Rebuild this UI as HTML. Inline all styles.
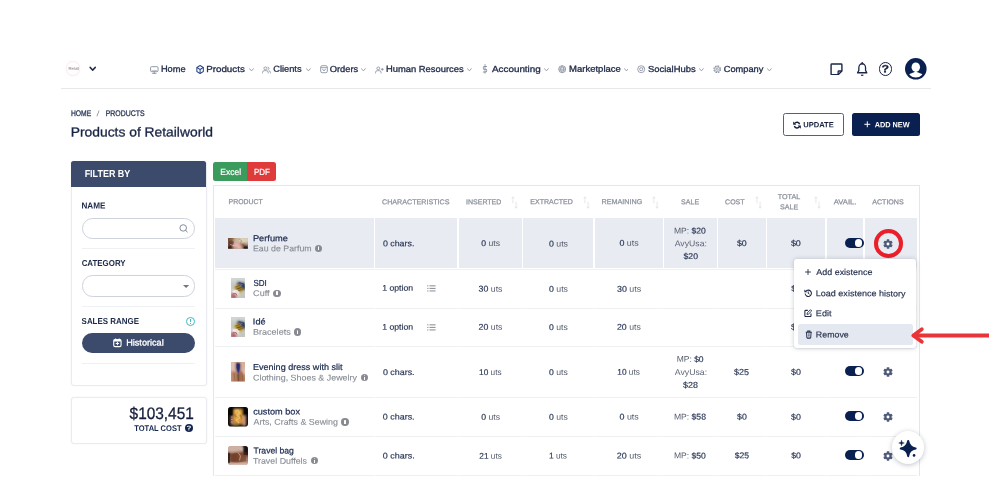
<!DOCTYPE html>
<html lang="en">
<head>
<meta charset="utf-8">
<title>Products of Retailworld</title>
<style>
html,body{margin:0;padding:0;background:#fff;}
body{width:1000px;height:500px;position:relative;overflow:hidden;font-family:"Liberation Sans",sans-serif;}
.app{position:absolute;left:0;top:0;width:1000px;height:500px;overflow:hidden;will-change:transform;background:#fff;}
.b{position:absolute;box-sizing:border-box;display:block;}
.t{position:absolute;white-space:nowrap;line-height:1;display:block;transform-origin:0 0;}
.g{color:#8b8f97;font-weight:400;-webkit-text-stroke:0;}
.u{color:#535a6a;font-weight:400;-webkit-text-stroke:0;}
</style>
</head>
<body>
<div class="app">
<div class="b" style="left:66.20px;top:61.40px;width:14.20px;height:14.20px;border-radius:50%;border:1px solid #fbf0f0;background:#fffdfd;box-shadow:0 0 1.500px #faeaea;"></div>
<span class="t" id="t0" style="left:68px;top:67px;font-size:3.8px;color:#a3a3a7;transform:translate(0.48px,0.87px) rotate(.03deg) scaleX(1.0862);-webkit-text-stroke:0.15px #a3a3a7;">Retail</span>
<svg class="b" style="left:88.60px;top:66.10px;" width="7.40" height="5.80" viewBox="0 0 10 7" preserveAspectRatio="none"><path d="M1.5 1.6 L5 5 L8.5 1.6" fill="none" stroke="#1d2745" stroke-width="1.9" stroke-linecap="round" stroke-linejoin="round"/></svg>
<svg class="b" style="left:150.00px;top:65.60px;" width="8.60" height="8.00" viewBox="0 0 24 24" preserveAspectRatio="none"><rect x="1.5" y="2" width="21" height="15" rx="3" fill="none" stroke="#8990a0" stroke-width="2.6"/><path d="M7 22 H17 M12 17 V22" stroke="#8990a0" stroke-width="2.6" fill="none" stroke-linecap="round"/><rect x="4" y="12" width="16" height="3" fill="#8990a0" opacity=".5"/></svg>
<span class="t" id="t1" style="left:160px;top:64px;font-size:8.7px;color:#222d4a;transform:translate(0.92px,0.87px) rotate(.03deg) scaleX(1.0657);-webkit-text-stroke:0.3px #222d4a;">Home</span>
<svg class="b" style="left:195.80px;top:65.00px;" width="8.20" height="9.00" viewBox="0 0 24 24" preserveAspectRatio="none"><path d="M12 1.5 L21.5 6.8 V17.2 L12 22.5 L2.5 17.2 V6.8 Z" fill="none" stroke="#2a4686" stroke-width="3" stroke-linejoin="round"/><path d="M2.5 6.8 L12 12 L21.5 6.8 M12 12 V22.5" fill="none" stroke="#2a4686" stroke-width="3" stroke-linejoin="round"/></svg>
<span class="t" id="t2" style="left:206px;top:64px;font-size:8.7px;color:#222d4a;transform:translate(0.16px,0.88px) rotate(.03deg) scaleX(1.1263);-webkit-text-stroke:0.3px #222d4a;">Products</span>
<svg class="b" style="left:248.60px;top:67.60px;" width="5.00" height="3.80" viewBox="0 0 10 6" preserveAspectRatio="none"><path d="M1 1 L5 4.6 L9 1" fill="none" stroke="#8990a0" stroke-width="1.5" stroke-linecap="round" stroke-linejoin="round"/></svg>
<svg class="b" style="left:262.20px;top:65.60px;" width="9.00" height="8.00" viewBox="0 0 24 24" preserveAspectRatio="none"><circle cx="9" cy="7" r="4" fill="none" stroke="#8990a0" stroke-width="2.4"/><path d="M1.5 21 v-2 a5 5 0 0 1 5-5 h5 a5 5 0 0 1 5 5 v2" fill="none" stroke="#8990a0" stroke-width="2.4" stroke-linecap="round"/><path d="M16 3.2 a4 4 0 0 1 0 7.6 M22.5 21 v-2 a5 5 0 0 0 -3.5 -4.7" fill="none" stroke="#8990a0" stroke-width="2.4" stroke-linecap="round"/></svg>
<span class="t" id="t3" style="left:273px;top:64px;font-size:8.7px;color:#222d4a;transform:translate(0.23px,0.86px) rotate(.03deg) scaleX(1.0680);-webkit-text-stroke:0.3px #222d4a;">Clients</span>
<svg class="b" style="left:305.80px;top:67.60px;" width="4.80" height="3.80" viewBox="0 0 10 6" preserveAspectRatio="none"><path d="M1 1 L5 4.6 L9 1" fill="none" stroke="#8990a0" stroke-width="1.5" stroke-linecap="round" stroke-linejoin="round"/></svg>
<svg class="b" style="left:319.80px;top:65.40px;" width="8.00" height="8.40" viewBox="0 0 24 24" preserveAspectRatio="none"><rect x="2" y="2" width="20" height="20" rx="4.5" fill="none" stroke="#8990a0" stroke-width="2.6"/><path d="M2 7.5 H22" stroke="#8990a0" stroke-width="2.4"/><path d="M8 12 a4 4 0 0 0 8 0" fill="none" stroke="#8990a0" stroke-width="2.4" stroke-linecap="round"/></svg>
<span class="t" id="t4" style="left:329px;top:64px;font-size:8.7px;color:#222d4a;transform:translate(0.74px,0.89px) rotate(.03deg) scaleX(1.0709);-webkit-text-stroke:0.3px #222d4a;">Orders</span>
<svg class="b" style="left:361.40px;top:67.60px;" width="4.80" height="3.80" viewBox="0 0 10 6" preserveAspectRatio="none"><path d="M1 1 L5 4.6 L9 1" fill="none" stroke="#8990a0" stroke-width="1.5" stroke-linecap="round" stroke-linejoin="round"/></svg>
<svg class="b" style="left:375.00px;top:65.60px;" width="8.80" height="8.00" viewBox="0 0 24 24" preserveAspectRatio="none"><circle cx="9" cy="7" r="4" fill="none" stroke="#8990a0" stroke-width="2.4"/><path d="M1.5 21 v-2 a5 5 0 0 1 5-5 h5 a5 5 0 0 1 5 5 v2" fill="none" stroke="#8990a0" stroke-width="2.4" stroke-linecap="round"/><path d="M20 7 v6 M17 10 h6" stroke="#8990a0" stroke-width="2.4" stroke-linecap="round"/></svg>
<span class="t" id="t5" style="left:385px;top:64px;font-size:8.7px;color:#222d4a;transform:translate(0.91px,0.87px) rotate(.03deg) scaleX(1.0805);-webkit-text-stroke:0.3px #222d4a;">Human Resources</span>
<svg class="b" style="left:467.40px;top:67.60px;" width="4.80" height="3.80" viewBox="0 0 10 6" preserveAspectRatio="none"><path d="M1 1 L5 4.6 L9 1" fill="none" stroke="#8990a0" stroke-width="1.5" stroke-linecap="round" stroke-linejoin="round"/></svg>
<svg class="b" style="left:482.20px;top:64.40px;" width="6.00" height="9.60" viewBox="2 0 20 24" preserveAspectRatio="none"><path d="M12 1 V23 M17.5 6 H9.5 a3.5 3.5 0 0 0 0 7 h5 a3.5 3.5 0 0 1 0 7 H6" fill="none" stroke="#8990a0" stroke-width="2.6" stroke-linecap="round"/></svg>
<span class="t" id="t6" style="left:491px;top:64px;font-size:8.7px;color:#222d4a;transform:translate(0.98px,0.93px) rotate(.03deg) scaleX(1.1348);-webkit-text-stroke:0.3px #222d4a;">Accounting</span>
<svg class="b" style="left:544.20px;top:67.60px;" width="4.80" height="3.80" viewBox="0 0 10 6" preserveAspectRatio="none"><path d="M1 1 L5 4.6 L9 1" fill="none" stroke="#8990a0" stroke-width="1.5" stroke-linecap="round" stroke-linejoin="round"/></svg>
<svg class="b" style="left:557.80px;top:65.40px;" width="8.40" height="8.40" viewBox="0 0 24 24" preserveAspectRatio="none"><circle cx="12" cy="12" r="10" fill="none" stroke="#8990a0" stroke-width="2.4"/><path d="M2 12 H22 M12 2 a15 15 0 0 1 0 20 a15 15 0 0 1 0 -20" fill="none" stroke="#8990a0" stroke-width="2.2"/><path d="M3.5 7.5 H20.5 M3.5 16.5 H20.5" stroke="#8990a0" stroke-width="1.6"/></svg>
<span class="t" id="t7" style="left:569px;top:64px;font-size:8.7px;color:#222d4a;transform:translate(0.08px,0.83px) rotate(.03deg) scaleX(1.0937);-webkit-text-stroke:0.3px #222d4a;">Marketplace</span>
<svg class="b" style="left:623.60px;top:67.60px;" width="4.80" height="3.80" viewBox="0 0 10 6" preserveAspectRatio="none"><path d="M1 1 L5 4.6 L9 1" fill="none" stroke="#8990a0" stroke-width="1.5" stroke-linecap="round" stroke-linejoin="round"/></svg>
<svg class="b" style="left:637.20px;top:65.40px;" width="8.40" height="8.40" viewBox="0 0 24 24" preserveAspectRatio="none"><circle cx="12" cy="12" r="10" fill="none" stroke="#8990a0" stroke-width="2.4"/><circle cx="12" cy="12" r="4.5" fill="none" stroke="#8990a0" stroke-width="2.4"/><path d="M16 9 L19 6" stroke="#8990a0" stroke-width="2.2"/></svg>
<span class="t" id="t8" style="left:648px;top:64px;font-size:8.7px;color:#222d4a;transform:translate(0.02px,0.88px) rotate(.03deg) scaleX(1.0849);-webkit-text-stroke:0.3px #222d4a;">SocialHubs</span>
<svg class="b" style="left:699.40px;top:67.60px;" width="4.80" height="3.80" viewBox="0 0 10 6" preserveAspectRatio="none"><path d="M1 1 L5 4.6 L9 1" fill="none" stroke="#8990a0" stroke-width="1.5" stroke-linecap="round" stroke-linejoin="round"/></svg>
<svg class="b" style="left:712.80px;top:65.40px;" width="8.40" height="8.40" viewBox="0 0 24 24" preserveAspectRatio="none"><circle cx="12" cy="12" r="9.5" fill="none" stroke="#8990a0" stroke-width="3" stroke-dasharray="5 2.4"/><circle cx="12" cy="12" r="7" fill="none" stroke="#8990a0" stroke-width="2"/><circle cx="12" cy="12" r="3" fill="none" stroke="#8990a0" stroke-width="2.2"/></svg>
<span class="t" id="t9" style="left:723px;top:64px;font-size:8.7px;color:#222d4a;transform:translate(0.73px,0.89px) rotate(.03deg) scaleX(1.0676);-webkit-text-stroke:0.3px #222d4a;">Company</span>
<svg class="b" style="left:767.00px;top:67.60px;" width="4.80" height="3.80" viewBox="0 0 10 6" preserveAspectRatio="none"><path d="M1 1 L5 4.6 L9 1" fill="none" stroke="#8990a0" stroke-width="1.5" stroke-linecap="round" stroke-linejoin="round"/></svg>
<svg class="b" style="left:830.40px;top:62.60px;" width="13.00" height="12.80" viewBox="0 0 24 24" preserveAspectRatio="none"><path d="M3.5 2 H20.5 a1.5 1.5 0 0 1 1.5 1.5 V15 L15 22 H3.5 a1.5 1.5 0 0 1 -1.5 -1.5 V3.5 a1.5 1.5 0 0 1 1.5 -1.5 Z" fill="none" stroke="#1b2747" stroke-width="2.6" stroke-linejoin="round"/><path d="M22 15 H16.5 a1.5 1.5 0 0 0 -1.5 1.5 V22" fill="none" stroke="#1b2747" stroke-width="2.4"/></svg>
<svg class="b" style="left:856.00px;top:62.00px;" width="12.40" height="14.40" viewBox="0 0 24 24" preserveAspectRatio="none"><path d="M12 3 a6.5 6.5 0 0 0 -6.5 6.5 V14 L3 18 H21 L18.5 14 V9.500 A6.5 6.5 0 0 0 12 3 Z" fill="none" stroke="#1b2747" stroke-width="2.5" stroke-linejoin="round"/><path d="M12 1 V3" stroke="#1b2747" stroke-width="2.5" stroke-linecap="round"/><path d="M9.8 21.5 a2.3 2.3 0 0 0 4.4 0 Z" fill="#1b2747" stroke="#1b2747" stroke-width="1"/></svg>
<div class="b" style="left:878.50px;top:62.10px;width:13.80px;height:13.80px;border-radius:50%;border:1.800px solid #16213f;"></div>
<span class="t" id="t10" style="left:881px;top:63px;font-size:10.5px;color:#16213f;transform:translate(0.57px,0.13px) rotate(.03deg) scaleX(1.1711);font-weight:700;-webkit-text-stroke:0.3px #16213f;">?</span>
<svg class="b" style="left:905.00px;top:58.40px;" width="21.60" height="21.60" viewBox="0 0 24 24" preserveAspectRatio="none"><circle cx="12" cy="12" r="12" fill="#0a2050"/><clipPath id="avc"><circle cx="12" cy="12" r="9.6"/></clipPath><g clip-path="url(#avc)"><ellipse cx="12" cy="10.2" rx="4.7" ry="5.3" fill="#fff"/><path d="M2 24 C2.5 18 6.5 17 9.5 16 L12 15 L14.5 16 C17.5 17 21.5 18 22 24 Z" fill="#fff"/></g></svg>
<div class="b" style="left:61.00px;top:88.00px;width:870.00px;height:1.00px;background:#e7e7e9;"></div>
<span class="t" id="t11" style="left:70px;top:110px;font-size:8.1px;color:#2b3856;transform:translate(0.94px,0.15px) rotate(.03deg) scaleX(0.8325);-webkit-text-stroke:0.3px #2b3856;">HOME</span>
<span class="t" id="t12" style="left:96px;top:110px;font-size:8.1px;color:#8b8f97;transform:translate(0.56px,0.18px) rotate(.03deg) scaleX(1.3448);">/</span>
<span class="t" id="t13" style="left:105px;top:109px;font-size:8.1px;color:#2b3856;transform:translate(0.66px,0.90px) rotate(.03deg) scaleX(0.8555);-webkit-text-stroke:0.3px #2b3856;">PRODUCTS</span>
<span class="t" id="t14" style="left:70px;top:125px;font-size:13.2px;color:#182443;transform:translate(0.80px,0.53px) rotate(.03deg) scaleX(1.0487);-webkit-text-stroke:0.3px #182443;">Products of Retailworld</span>
<div class="b" style="left:783.00px;top:113.00px;width:61.00px;height:23.20px;border:1px solid #55607c;border-radius:2.5px;background:#fff;"></div>
<svg class="b" style="left:793.40px;top:120.60px;" width="8.00" height="8.20" viewBox="0 0 24 24" preserveAspectRatio="none"><path d="M19.800 9.500 A8.200 8.200 0 0 0 5 7.200 M4.200 14.500 A8.200 8.200 0 0 0 19 16.800" fill="none" stroke="#16213f" stroke-width="4.200"/><path d="M0.500 1.500 V11 H10 Z M23.500 22.500 V13 H14 Z" fill="#16213f"/></svg>
<span class="t" id="t15" style="left:803px;top:121px;font-size:7.6px;color:#16213f;transform:translate(0.22px,0.36px) rotate(.03deg) scaleX(0.9968);font-weight:700;">UPDATE</span>
<div class="b" style="left:852.00px;top:113.00px;width:68.00px;height:23.20px;border-radius:2.5px;background:#0a2050;"></div>
<svg class="b" style="left:864.00px;top:121.20px;" width="6.60" height="6.60" viewBox="0 0 10 10" preserveAspectRatio="none"><path d="M5 0.500 V9.500 M0.500 5 H9.500" stroke="#fff" stroke-width="1.5" fill="none"/></svg>
<span class="t" id="t16" style="left:874px;top:121px;font-size:7.6px;color:#fff;transform:translate(0.63px,0.36px) rotate(.03deg) scaleX(0.9660);font-weight:700;">ADD NEW</span>
<div class="b" style="left:70.60px;top:161.00px;width:136.20px;height:225.00px;border:1px solid #e9ebef;border-radius:3px;background:#fff;box-shadow:0 0 2px rgba(40,50,80,.07);"></div>
<div class="b" style="left:71.00px;top:161.00px;width:135.40px;height:26.20px;background:#3c4a6b;border-radius:2.5px 2.5px 0 0;"></div>
<span class="t" id="t17" style="left:84px;top:169px;font-size:10.2px;color:#fff;transform:translate(0.63px,0.30px) rotate(.03deg) scaleX(0.8809);font-weight:700;">FILTER BY</span>
<span class="t" id="t18" style="left:81px;top:201px;font-size:8.7px;color:#1c2847;transform:translate(0.48px,0.59px) rotate(.03deg) scaleX(0.9391);font-weight:700;">NAME</span>
<div class="b" style="left:81.70px;top:217.70px;width:113.80px;height:21.10px;border:1.2px solid #cdd2db;border-radius:10.500px;background:#fff;"></div>
<svg class="b" style="left:178.80px;top:224.00px;" width="9.20" height="9.00" viewBox="0 0 24 24" preserveAspectRatio="none"><circle cx="11" cy="10.500" r="8.600" fill="none" stroke="#737b8c" stroke-width="2.300"/><path d="M17.500 17 L21.500 21" stroke="#737b8c" stroke-width="2.600" stroke-linecap="round"/></svg>
<div class="b" style="left:82.00px;top:248.40px;width:113.20px;height:1.00px;background:#eef0f3;"></div>
<span class="t" id="t19" style="left:81px;top:259px;font-size:8.7px;color:#1c2847;transform:translate(0.65px,0.42px) rotate(.03deg) scaleX(0.9101);font-weight:700;">CATEGORY</span>
<div class="b" style="left:81.70px;top:275.40px;width:113.80px;height:21.40px;border:1.2px solid #cdd2db;border-radius:10.500px;background:#fff;"></div>
<svg class="b" style="left:182.60px;top:285.00px;" width="6.20" height="3.00" viewBox="0 0 10 5" preserveAspectRatio="none"><path d="M0 0 H10 L5 5 Z" fill="#6f7685"/></svg>
<div class="b" style="left:82.00px;top:306.40px;width:113.20px;height:1.00px;background:#eef0f3;"></div>
<span class="t" id="t20" style="left:81px;top:316px;font-size:8.7px;color:#1c2847;transform:translate(0.59px,0.85px) rotate(.03deg) scaleX(0.9137);font-weight:700;">SALES RANGE</span>
<div class="b" style="left:186.20px;top:317.00px;width:8.80px;height:8.80px;border:1px solid #3fb8c4;border-radius:50%;"></div>
<div class="b" style="left:190.10px;top:319.20px;width:1.00px;height:2.80px;background:#3fb8c4;"></div>
<div class="b" style="left:190.10px;top:322.80px;width:1.00px;height:1.00px;background:#3fb8c4;"></div>
<div class="b" style="left:81.80px;top:332.70px;width:113.60px;height:20.60px;background:#3c4a6b;border-radius:10.500px;"></div>
<svg class="b" style="left:113.20px;top:338.20px;" width="8.80" height="9.40" viewBox="0 0 24 24" preserveAspectRatio="none"><rect x="2" y="4" width="20" height="18" rx="3.500" fill="none" stroke="#fff" stroke-width="3"/><path d="M7 1 V6 M17 1 V6" stroke="#fff" stroke-width="3"/><path d="M12 9.500 V18.500 M7.500 14 H16.500" stroke="#fff" stroke-width="2.6"/><rect x="2" y="4" width="20" height="5" fill="#fff"/></svg>
<span class="t" id="t21" style="left:126px;top:338px;font-size:8.8px;color:#fff;transform:translate(0.19px,0.60px) rotate(.03deg) scaleX(1.0368);-webkit-text-stroke:0.3px #fff;">Historical</span>
<div class="b" style="left:82.00px;top:362.60px;width:113.20px;height:1.00px;background:#eef0f3;"></div>
<div class="b" style="left:70.60px;top:396.80px;width:136.20px;height:47.00px;border:1px solid #e9ebef;border-radius:3px;background:#fff;box-shadow:0 0 2px rgba(40,50,80,.07);"></div>
<span class="t" id="t22" style="left:129px;top:406px;font-size:16.6px;color:#151f3c;transform:translate(0.57px,0.19px) rotate(.03deg) scaleX(0.9283);-webkit-text-stroke:0.3px #151f3c;">$103,451</span>
<span class="t" id="t23" style="left:134px;top:425px;font-size:8.2px;color:#14284f;transform:translate(0.31px,0.01px) rotate(.03deg) scaleX(0.9179);font-weight:700;">TOTAL COST</span>
<div class="b" style="left:185.00px;top:424.00px;width:8.20px;height:8.20px;background:#14284f;border-radius:50%;"></div>
<span class="t" id="t24" style="left:186px;top:425px;font-size:6.6px;color:#fff;transform:translate(0.49px,0.34px) rotate(.03deg) scaleX(1.2110);font-weight:700;">?</span>
<div class="b" style="left:213.00px;top:162.40px;width:34.00px;height:18.60px;background:#3a9b5c;border-radius:2.5px 0 0 2.5px;"></div>
<div class="b" style="left:246.60px;top:162.40px;width:29.80px;height:18.60px;background:#e03b3b;border-radius:0 2.5px 2.5px 0;"></div>
<span class="t" id="t25" style="left:220px;top:167px;font-size:8.9px;color:#fff;transform:translate(0.30px,0.89px) rotate(.03deg) scaleX(0.9586);-webkit-text-stroke:0.2px #fff;">Excel</span>
<span class="t" id="t26" style="left:253px;top:168px;font-size:8.9px;color:#fff;transform:translate(0.94px,0.31px) rotate(.03deg) scaleX(0.8930);-webkit-text-stroke:0.2px #fff;">PDF</span>
<div class="b" style="left:213.00px;top:184.60px;width:707.00px;height:1.00px;background:#e4e6ea;"></div>
<div class="b" style="left:213.00px;top:185.00px;width:1.00px;height:291.40px;background:#e4e6ea;"></div>
<div class="b" style="left:919.00px;top:185.00px;width:1.00px;height:291.40px;background:#e4e6ea;"></div>
<div class="b" style="left:215.20px;top:218.00px;width:158.90px;height:49.60px;background:#e8ebf1;"></div>
<div class="b" style="left:375.30px;top:218.00px;width:82.10px;height:49.60px;background:#e8ebf1;"></div>
<div class="b" style="left:458.90px;top:218.00px;width:63.10px;height:49.60px;background:#e8ebf1;"></div>
<div class="b" style="left:523.10px;top:218.00px;width:70.30px;height:49.60px;background:#e8ebf1;"></div>
<div class="b" style="left:594.70px;top:218.00px;width:68.20px;height:49.60px;background:#e8ebf1;"></div>
<div class="b" style="left:664.10px;top:218.00px;width:52.70px;height:49.60px;background:#e8ebf1;"></div>
<div class="b" style="left:718.00px;top:218.00px;width:47.70px;height:49.60px;background:#e8ebf1;"></div>
<div class="b" style="left:766.90px;top:218.00px;width:58.50px;height:49.60px;background:#e8ebf1;"></div>
<div class="b" style="left:826.50px;top:218.00px;width:36.90px;height:49.60px;background:#e8ebf1;"></div>
<div class="b" style="left:864.70px;top:218.00px;width:52.70px;height:49.60px;background:#e8ebf1;"></div>
<div class="b" style="left:215.20px;top:268.70px;width:702.20px;height:1.00px;background:#f3f4f7;"></div>
<div class="b" style="left:215.40px;top:268.70px;width:158.50px;height:1.00px;background:#eef0f3;"></div>
<div class="b" style="left:375.50px;top:268.70px;width:81.70px;height:1.00px;background:#eef0f3;"></div>
<div class="b" style="left:459.10px;top:268.70px;width:62.70px;height:1.00px;background:#eef0f3;"></div>
<div class="b" style="left:523.30px;top:268.70px;width:69.90px;height:1.00px;background:#eef0f3;"></div>
<div class="b" style="left:594.90px;top:268.70px;width:67.80px;height:1.00px;background:#eef0f3;"></div>
<div class="b" style="left:664.30px;top:268.70px;width:52.30px;height:1.00px;background:#eef0f3;"></div>
<div class="b" style="left:718.20px;top:268.70px;width:47.30px;height:1.00px;background:#eef0f3;"></div>
<div class="b" style="left:767.10px;top:268.70px;width:58.10px;height:1.00px;background:#eef0f3;"></div>
<div class="b" style="left:826.70px;top:268.70px;width:36.50px;height:1.00px;background:#eef0f3;"></div>
<div class="b" style="left:864.90px;top:268.70px;width:52.30px;height:1.00px;background:#eef0f3;"></div>
<div class="b" style="left:215.20px;top:307.50px;width:702.20px;height:1.00px;background:#f3f4f7;"></div>
<div class="b" style="left:215.40px;top:307.50px;width:158.50px;height:1.00px;background:#eef0f3;"></div>
<div class="b" style="left:375.50px;top:307.50px;width:81.70px;height:1.00px;background:#eef0f3;"></div>
<div class="b" style="left:459.10px;top:307.50px;width:62.70px;height:1.00px;background:#eef0f3;"></div>
<div class="b" style="left:523.30px;top:307.50px;width:69.90px;height:1.00px;background:#eef0f3;"></div>
<div class="b" style="left:594.90px;top:307.50px;width:67.80px;height:1.00px;background:#eef0f3;"></div>
<div class="b" style="left:664.30px;top:307.50px;width:52.30px;height:1.00px;background:#eef0f3;"></div>
<div class="b" style="left:718.20px;top:307.50px;width:47.30px;height:1.00px;background:#eef0f3;"></div>
<div class="b" style="left:767.10px;top:307.50px;width:58.10px;height:1.00px;background:#eef0f3;"></div>
<div class="b" style="left:826.70px;top:307.50px;width:36.50px;height:1.00px;background:#eef0f3;"></div>
<div class="b" style="left:864.90px;top:307.50px;width:52.30px;height:1.00px;background:#eef0f3;"></div>
<div class="b" style="left:215.20px;top:346.30px;width:702.20px;height:1.00px;background:#f3f4f7;"></div>
<div class="b" style="left:215.40px;top:346.30px;width:158.50px;height:1.00px;background:#eef0f3;"></div>
<div class="b" style="left:375.50px;top:346.30px;width:81.70px;height:1.00px;background:#eef0f3;"></div>
<div class="b" style="left:459.10px;top:346.30px;width:62.70px;height:1.00px;background:#eef0f3;"></div>
<div class="b" style="left:523.30px;top:346.30px;width:69.90px;height:1.00px;background:#eef0f3;"></div>
<div class="b" style="left:594.90px;top:346.30px;width:67.80px;height:1.00px;background:#eef0f3;"></div>
<div class="b" style="left:664.30px;top:346.30px;width:52.30px;height:1.00px;background:#eef0f3;"></div>
<div class="b" style="left:718.20px;top:346.30px;width:47.30px;height:1.00px;background:#eef0f3;"></div>
<div class="b" style="left:767.10px;top:346.30px;width:58.10px;height:1.00px;background:#eef0f3;"></div>
<div class="b" style="left:826.70px;top:346.30px;width:36.50px;height:1.00px;background:#eef0f3;"></div>
<div class="b" style="left:864.90px;top:346.30px;width:52.30px;height:1.00px;background:#eef0f3;"></div>
<div class="b" style="left:215.20px;top:396.90px;width:702.20px;height:1.00px;background:#f3f4f7;"></div>
<div class="b" style="left:215.40px;top:396.90px;width:158.50px;height:1.00px;background:#eef0f3;"></div>
<div class="b" style="left:375.50px;top:396.90px;width:81.70px;height:1.00px;background:#eef0f3;"></div>
<div class="b" style="left:459.10px;top:396.90px;width:62.70px;height:1.00px;background:#eef0f3;"></div>
<div class="b" style="left:523.30px;top:396.90px;width:69.90px;height:1.00px;background:#eef0f3;"></div>
<div class="b" style="left:594.90px;top:396.90px;width:67.80px;height:1.00px;background:#eef0f3;"></div>
<div class="b" style="left:664.30px;top:396.90px;width:52.30px;height:1.00px;background:#eef0f3;"></div>
<div class="b" style="left:718.20px;top:396.90px;width:47.30px;height:1.00px;background:#eef0f3;"></div>
<div class="b" style="left:767.10px;top:396.90px;width:58.10px;height:1.00px;background:#eef0f3;"></div>
<div class="b" style="left:826.70px;top:396.90px;width:36.50px;height:1.00px;background:#eef0f3;"></div>
<div class="b" style="left:864.90px;top:396.90px;width:52.30px;height:1.00px;background:#eef0f3;"></div>
<div class="b" style="left:215.20px;top:436.30px;width:702.20px;height:1.00px;background:#f3f4f7;"></div>
<div class="b" style="left:215.40px;top:436.30px;width:158.50px;height:1.00px;background:#eef0f3;"></div>
<div class="b" style="left:375.50px;top:436.30px;width:81.70px;height:1.00px;background:#eef0f3;"></div>
<div class="b" style="left:459.10px;top:436.30px;width:62.70px;height:1.00px;background:#eef0f3;"></div>
<div class="b" style="left:523.30px;top:436.30px;width:69.90px;height:1.00px;background:#eef0f3;"></div>
<div class="b" style="left:594.90px;top:436.30px;width:67.80px;height:1.00px;background:#eef0f3;"></div>
<div class="b" style="left:664.30px;top:436.30px;width:52.30px;height:1.00px;background:#eef0f3;"></div>
<div class="b" style="left:718.20px;top:436.30px;width:47.30px;height:1.00px;background:#eef0f3;"></div>
<div class="b" style="left:767.10px;top:436.30px;width:58.10px;height:1.00px;background:#eef0f3;"></div>
<div class="b" style="left:826.70px;top:436.30px;width:36.50px;height:1.00px;background:#eef0f3;"></div>
<div class="b" style="left:864.90px;top:436.30px;width:52.30px;height:1.00px;background:#eef0f3;"></div>
<div class="b" style="left:215.20px;top:474.90px;width:702.20px;height:1.00px;background:#f3f4f7;"></div>
<div class="b" style="left:215.40px;top:474.90px;width:158.50px;height:1.00px;background:#eef0f3;"></div>
<div class="b" style="left:375.50px;top:474.90px;width:81.70px;height:1.00px;background:#eef0f3;"></div>
<div class="b" style="left:459.10px;top:474.90px;width:62.70px;height:1.00px;background:#eef0f3;"></div>
<div class="b" style="left:523.30px;top:474.90px;width:69.90px;height:1.00px;background:#eef0f3;"></div>
<div class="b" style="left:594.90px;top:474.90px;width:67.80px;height:1.00px;background:#eef0f3;"></div>
<div class="b" style="left:664.30px;top:474.90px;width:52.30px;height:1.00px;background:#eef0f3;"></div>
<div class="b" style="left:718.20px;top:474.90px;width:47.30px;height:1.00px;background:#eef0f3;"></div>
<div class="b" style="left:767.10px;top:474.90px;width:58.10px;height:1.00px;background:#eef0f3;"></div>
<div class="b" style="left:826.70px;top:474.90px;width:36.50px;height:1.00px;background:#eef0f3;"></div>
<div class="b" style="left:864.90px;top:474.90px;width:52.30px;height:1.00px;background:#eef0f3;"></div>
<span class="t" id="t27" style="left:228px;top:198px;font-size:7.0px;color:#8c929d;transform:translate(0.58px,0.07px) rotate(.03deg) scaleX(0.9860);-webkit-text-stroke:0.25px #8c929d;">PRODUCT</span>
<span class="t" id="t28" style="left:382px;top:198px;font-size:7.0px;color:#8c929d;transform:translate(0.04px,0.15px) rotate(.03deg) scaleX(1.0207);-webkit-text-stroke:0.25px #8c929d;">CHARACTERISTICS</span>
<span class="t" id="t29" style="left:466px;top:198px;font-size:7.0px;color:#8c929d;transform:translate(0.01px,0.18px) rotate(.03deg) scaleX(1.0019);-webkit-text-stroke:0.25px #8c929d;">INSERTED</span>
<svg class="b" style="left:511.00px;top:196.00px;" width="7.00" height="13.00" viewBox="0 0 11 16" preserveAspectRatio="none"><path d="M3 1 V9 M1 3 L3 1 L5 3" fill="none" stroke="#dcdfe5" stroke-width="1"/><path d="M8 15 V7 M6 13 L8 15 L10 13" fill="none" stroke="#dcdfe5" stroke-width="1"/></svg>
<span class="t" id="t30" style="left:530px;top:198px;font-size:7.0px;color:#8c929d;transform:translate(0.27px,0.02px) rotate(.03deg) scaleX(1.0032);-webkit-text-stroke:0.25px #8c929d;">EXTRACTED</span>
<svg class="b" style="left:582.60px;top:196.00px;" width="7.00" height="13.00" viewBox="0 0 11 16" preserveAspectRatio="none"><path d="M3 1 V9 M1 3 L3 1 L5 3" fill="none" stroke="#dcdfe5" stroke-width="1"/><path d="M8 15 V7 M6 13 L8 15 L10 13" fill="none" stroke="#dcdfe5" stroke-width="1"/></svg>
<span class="t" id="t31" style="left:601px;top:198px;font-size:7.0px;color:#8c929d;transform:translate(0.41px,0.08px) rotate(.03deg) scaleX(1.0327);-webkit-text-stroke:0.25px #8c929d;">REMAINING</span>
<svg class="b" style="left:652.00px;top:196.00px;" width="7.00" height="13.00" viewBox="0 0 11 16" preserveAspectRatio="none"><path d="M3 1 V9 M1 3 L3 1 L5 3" fill="none" stroke="#dcdfe5" stroke-width="1"/><path d="M8 15 V7 M6 13 L8 15 L10 13" fill="none" stroke="#dcdfe5" stroke-width="1"/></svg>
<span class="t" id="t32" style="left:681px;top:198px;font-size:7.0px;color:#8c929d;transform:translate(0.07px,0.20px) rotate(.03deg) scaleX(1.0082);-webkit-text-stroke:0.25px #8c929d;">SALE</span>
<span class="t" id="t33" style="left:725px;top:198px;font-size:7.0px;color:#8c929d;transform:translate(0.08px,0.26px) rotate(.03deg) scaleX(1.0044);-webkit-text-stroke:0.25px #8c929d;">COST</span>
<svg class="b" style="left:755.00px;top:196.00px;" width="7.00" height="13.00" viewBox="0 0 11 16" preserveAspectRatio="none"><path d="M3 1 V9 M1 3 L3 1 L5 3" fill="none" stroke="#dcdfe5" stroke-width="1"/><path d="M8 15 V7 M6 13 L8 15 L10 13" fill="none" stroke="#dcdfe5" stroke-width="1"/></svg>
<span class="t" id="t34" style="left:777px;top:193px;font-size:7.0px;color:#8c929d;transform:translate(0.75px,0.10px) rotate(.03deg) scaleX(1.0268);-webkit-text-stroke:0.25px #8c929d;">TOTAL</span>
<span class="t" id="t35" style="left:780px;top:203px;font-size:7.0px;color:#8c929d;transform:translate(0.11px,0.37px) rotate(.03deg) scaleX(1.0146);-webkit-text-stroke:0.25px #8c929d;">SALE</span>
<svg class="b" style="left:814.40px;top:196.00px;" width="7.00" height="13.00" viewBox="0 0 11 16" preserveAspectRatio="none"><path d="M3 1 V9 M1 3 L3 1 L5 3" fill="none" stroke="#dcdfe5" stroke-width="1"/><path d="M8 15 V7 M6 13 L8 15 L10 13" fill="none" stroke="#dcdfe5" stroke-width="1"/></svg>
<span class="t" id="t36" style="left:833px;top:198px;font-size:7.0px;color:#8c929d;transform:translate(0.68px,0.18px) rotate(.03deg) scaleX(1.0958);-webkit-text-stroke:0.25px #8c929d;">AVAIL.</span>
<span class="t" id="t37" style="left:872px;top:198px;font-size:7.0px;color:#8c929d;transform:translate(0.22px,0.27px) rotate(.03deg) scaleX(1.0122);-webkit-text-stroke:0.25px #8c929d;">ACTIONS</span>
<svg class="b" style="left:228px;top:238px" width="20" height="10.8" viewBox="0 0 20 10.8"><defs><filter id="fc1" filterUnits="userSpaceOnUse" x="-4" y="-4" width="30" height="30"><feGaussianBlur stdDeviation="0.800"/></filter><clipPath id="c1"><rect width="20" height="10.8" rx="0"/></clipPath></defs><g clip-path="url(#c1)"><rect width="20" height="11" fill="#b08a78"/><g filter="url(#fc1)"><rect x="-1" y="-1" width="7" height="13" fill="#6a4632"/><rect x="2" y="1" width="5" height="4" fill="#a07858"/><rect x="6" y="-1" width="6" height="5" fill="#c9b59a"/><rect x="11" y="-1" width="10" height="6" fill="#d9d2b8"/><rect x="5" y="4" width="8" height="6" fill="#d9a8a2"/><rect x="12" y="5" width="5" height="3" fill="#8a5a40"/><rect x="0" y="8" width="5" height="4" fill="#3a2a22"/><rect x="15" y="8" width="6" height="4" fill="#2e2420"/><rect x="9" y="7" width="4" height="4" fill="#e3b8b0"/></g><g opacity=".55"><path d="M1 3 Q4 1 6 4 Q5 8 2 9 Z" fill="#4a2e20"/><path d="M2 6.500 Q6 9 10 6.500" stroke="#f0d0c8" stroke-width="1" fill="none"/><rect x="16" y="8.500" width="3" height="2" fill="#15100e"/><rect x="0" y="8.500" width="3" height="2" fill="#2a1c16"/><path d="M11 1 L14 3 L12 5" stroke="#8a6a50" stroke-width=".8" fill="none"/></g></g></svg>
<span class="t" id="t38" style="left:252px;top:234px;font-size:8.7px;color:#202e52;transform:translate(0.94px,0.21px) rotate(.03deg) scaleX(1.0676);-webkit-text-stroke:0.22px #202e52;">Perfume</span>
<span class="t" id="t39" style="left:252px;top:244px;font-size:8.3px;color:#868a92;transform:translate(0.92px,0.21px) rotate(.03deg) scaleX(1.0620);-webkit-text-stroke:0.1px #868a92;">Eau de Parfum</span>
<div class="b" style="left:314.90px;top:244.50px;width:7.40px;height:7.40px;background:#888b91;border-radius:50%;"></div>
<div class="b" style="left:318.05px;top:247.40px;width:1.10px;height:3.00px;background:#fff;"></div>
<div class="b" style="left:318.05px;top:245.70px;width:1.10px;height:1.00px;background:#fff;border-radius:50%;"></div>
<span class="t" id="t40" style="left:382px;top:239px;font-size:8.3px;color:#2b3856;transform:translate(0.91px,0.32px) rotate(.03deg) scaleX(1.0656);-webkit-text-stroke:0.18px #2b3856;">0 chars.</span>
<span class="t" id="t41" style="left:481px;top:238px;font-size:8.3px;color:#2b3856;transform:translate(0.25px,0.95px) rotate(.03deg) scaleX(1.0419);-webkit-text-stroke:0.18px #2b3856;">0 <span class="u">uts</span></span>
<span class="t" id="t42" style="left:548px;top:239px;font-size:8.3px;color:#2b3856;transform:translate(0.97px,0.42px) rotate(.03deg) scaleX(1.0573);-webkit-text-stroke:0.18px #2b3856;">0 <span class="u">uts</span></span>
<span class="t" id="t43" style="left:619px;top:238px;font-size:8.3px;color:#2b3856;transform:translate(0.46px,0.80px) rotate(.03deg) scaleX(1.0702);-webkit-text-stroke:0.18px #2b3856;">0 <span class="u">uts</span></span>
<span class="t" id="t44" style="left:673px;top:226px;font-size:8.3px;color:#2b3856;transform:translate(0.96px,0.38px) rotate(.03deg) scaleX(1.0296);-webkit-text-stroke:0.18px #2b3856;"><span class="u">MP:</span> $20</span>
<span class="t" id="t45" style="left:674px;top:239px;font-size:8.3px;color:#5f6574;transform:translate(0.74px,0.22px) rotate(.03deg) scaleX(1.0471);">AvyUsa:</span>
<span class="t" id="t46" style="left:683px;top:252px;font-size:8.3px;color:#2b3856;transform:translate(0.55px,0.10px) rotate(.03deg) scaleX(1.0412);-webkit-text-stroke:0.18px #2b3856;">$20</span>
<span class="t" id="t47" style="left:736px;top:239px;font-size:8.3px;color:#2b3856;transform:translate(0.92px,0.08px) rotate(.03deg) scaleX(1.0606);-webkit-text-stroke:0.18px #2b3856;">$0</span>
<span class="t" id="t48" style="left:790px;top:238px;font-size:8.3px;color:#2b3856;transform:translate(0.89px,0.92px) rotate(.03deg) scaleX(1.0807);-webkit-text-stroke:0.18px #2b3856;">$0</span>
<div class="b" style="left:845.30px;top:237.50px;width:18.60px;height:10.60px;background:#0a2050;border-radius:5.300px;"></div>
<div class="b" style="left:854.90px;top:238.90px;width:7.60px;height:7.80px;background:#fff;border-radius:50%;"></div>
<svg class="b" style="left:882.90px;top:238.60px;" width="10.00" height="10.00" viewBox="0 0 24 24" preserveAspectRatio="none"><circle cx="12" cy="12" r="8" fill="#4e5a78"/><g fill="#4e5a78"><rect x="8.700" y="0.800" width="6.600" height="22.400" rx="1.500" transform="rotate(0 12 12)"/><rect x="8.700" y="0.800" width="6.600" height="22.400" rx="1.500" transform="rotate(60 12 12)"/><rect x="8.700" y="0.800" width="6.600" height="22.400" rx="1.500" transform="rotate(120 12 12)"/></g><circle cx="12" cy="12" r="3.500" fill="#fff"/></svg>
<svg class="b" style="left:231px;top:278px" width="14" height="20" viewBox="0 0 14 20"><defs><filter id="fc2" filterUnits="userSpaceOnUse" x="-4" y="-4" width="30" height="30"><feGaussianBlur stdDeviation="0.800"/></filter><clipPath id="c2"><rect width="14" height="20" rx="0"/></clipPath></defs><g clip-path="url(#c2)"><rect width="14" height="20" fill="#c6cac6"/><g filter="url(#fc2)"><rect x="-1" y="-1" width="16" height="5" fill="#d0d6d4"/><path d="M6.500 3.500 L13.500 4.500 L14.500 11.500 L10.500 13 L5.500 8 Z" fill="#243a52"/><path d="M8.500 5 L12 6 L12 8.500 L9 7.500 Z" fill="#5f6fae"/><path d="M3.500 8 L8.500 6.500 L12.500 12.500 L8 16.500 L3 12 Z" fill="#c79c22"/><path d="M4.500 10.500 L10 9 L10.500 10.500 L5 12.500 Z" fill="#5e4d18"/><path d="M1 12.500 L5 11.500 L9 16 L5 19 L1 17 Z" fill="#f2ebe9"/><path d="M-1 15 L3.500 15 L6.500 18 L5 21 L-1 21 Z" fill="#c98a90"/><path d="M0.500 17.500 L4 17.500 L5 19 L2 20 Z" fill="#8a3a44"/><rect x="9.500" y="15.500" width="6" height="6" fill="#c2c6c0"/></g><g opacity=".6"><path d="M7.500 4 L13 5.500 L13.500 9.500 L10.500 8 Z" fill="#1c2f44"/><path d="M9.500 5.500 L11.500 6.200 L11.500 7.500 L9.500 6.800 Z" fill="#6a7cc0"/><path d="M4.500 9 L9 7.500 M5.500 11 L10.500 9.500 M6.500 13 L11.500 11.500" stroke="#4a3a10" stroke-width=".9" fill="none"/><path d="M2 13.500 L6 12.500 L8 15" stroke="#ffffff" stroke-width="1.200" fill="none"/><path d="M1.500 16 L5 15.500 L6 17.500" stroke="#8a2a36" stroke-width="1" fill="none"/></g></g></svg>
<span class="t" id="t49" style="left:253px;top:278px;font-size:8.7px;color:#202e52;transform:translate(0.39px,0.94px) rotate(.03deg) scaleX(0.9203);-webkit-text-stroke:0.22px #202e52;">SDI</span>
<span class="t" id="t50" style="left:253px;top:289px;font-size:8.3px;color:#868a92;transform:translate(0.12px,0.07px) rotate(.03deg) scaleX(1.0864);-webkit-text-stroke:0.1px #868a92;">Cuff</span>
<div class="b" style="left:273.30px;top:289.50px;width:7.40px;height:7.40px;background:#888b91;border-radius:50%;"></div>
<div class="b" style="left:276.45px;top:292.40px;width:1.10px;height:3.00px;background:#fff;"></div>
<div class="b" style="left:276.45px;top:290.70px;width:1.10px;height:1.00px;background:#fff;border-radius:50%;"></div>
<span class="t" id="t51" style="left:382px;top:283px;font-size:8.3px;color:#2b3856;transform:translate(0.15px,0.85px) rotate(.03deg) scaleX(1.0487);-webkit-text-stroke:0.18px #2b3856;">1 option</span>
<svg class="b" style="left:427.00px;top:284.80px;" width="8.80" height="6.80" viewBox="0 0 21 16" preserveAspectRatio="none"><path d="M6 2 H20.500 M6 8 H20.500 M6 14 H20.500" stroke="#6e737d" stroke-width="2" fill="none"/><path d="M0.500 2 H3.500 M0.500 8 H3.500 M0.500 14 H3.500" stroke="#6e737d" stroke-width="2" fill="none"/></svg>
<span class="t" id="t52" style="left:478px;top:284px;font-size:8.3px;color:#2b3856;transform:translate(0.56px,0.62px) rotate(.03deg) scaleX(1.0579);-webkit-text-stroke:0.18px #2b3856;">30 <span class="u">uts</span></span>
<span class="t" id="t53" style="left:548px;top:284px;font-size:8.3px;color:#2b3856;transform:translate(0.96px,0.63px) rotate(.03deg) scaleX(1.0549);-webkit-text-stroke:0.18px #2b3856;">0 <span class="u">uts</span></span>
<span class="t" id="t54" style="left:616px;top:284px;font-size:8.3px;color:#2b3856;transform:translate(0.98px,0.73px) rotate(.03deg) scaleX(1.0691);-webkit-text-stroke:0.18px #2b3856;">30 <span class="u">uts</span></span>
<span class="t" id="t55" style="left:791px;top:284px;font-size:8.3px;color:#2b3856;transform:translate(0.15px,0.35px) rotate(.03deg) scaleX(1.0526);-webkit-text-stroke:0.18px #2b3856;">$0</span>
<div class="b" style="left:845.30px;top:282.70px;width:18.60px;height:10.60px;background:#0a2050;border-radius:5.300px;"></div>
<div class="b" style="left:854.90px;top:284.10px;width:7.60px;height:7.80px;background:#fff;border-radius:50%;"></div>
<svg class="b" style="left:882.90px;top:283.60px;" width="10.00" height="10.00" viewBox="0 0 24 24" preserveAspectRatio="none"><circle cx="12" cy="12" r="8" fill="#4e5a78"/><g fill="#4e5a78"><rect x="8.700" y="0.800" width="6.600" height="22.400" rx="1.500" transform="rotate(0 12 12)"/><rect x="8.700" y="0.800" width="6.600" height="22.400" rx="1.500" transform="rotate(60 12 12)"/><rect x="8.700" y="0.800" width="6.600" height="22.400" rx="1.500" transform="rotate(120 12 12)"/></g><circle cx="12" cy="12" r="3.500" fill="#fff"/></svg>
<svg class="b" style="left:231px;top:317px" width="14" height="20" viewBox="0 0 14 20"><defs><filter id="fc3" filterUnits="userSpaceOnUse" x="-4" y="-4" width="30" height="30"><feGaussianBlur stdDeviation="0.800"/></filter><clipPath id="c3"><rect width="14" height="20" rx="0"/></clipPath></defs><g clip-path="url(#c3)"><rect width="14" height="20" fill="#c6cac6"/><g filter="url(#fc3)"><rect x="-1" y="-1" width="16" height="5" fill="#d0d6d4"/><path d="M6.500 3.500 L13.500 4.500 L14.500 11.500 L10.500 13 L5.500 8 Z" fill="#243a52"/><path d="M8.500 5 L12 6 L12 8.500 L9 7.500 Z" fill="#5f6fae"/><path d="M3.500 8 L8.500 6.500 L12.500 12.500 L8 16.500 L3 12 Z" fill="#c79c22"/><path d="M4.500 10.500 L10 9 L10.500 10.500 L5 12.500 Z" fill="#5e4d18"/><path d="M1 12.500 L5 11.500 L9 16 L5 19 L1 17 Z" fill="#f2ebe9"/><path d="M-1 15 L3.500 15 L6.500 18 L5 21 L-1 21 Z" fill="#c98a90"/><path d="M0.500 17.500 L4 17.500 L5 19 L2 20 Z" fill="#8a3a44"/><rect x="9.500" y="15.500" width="6" height="6" fill="#c2c6c0"/></g><g opacity=".6"><path d="M7.500 4 L13 5.500 L13.500 9.500 L10.500 8 Z" fill="#1c2f44"/><path d="M9.500 5.500 L11.500 6.200 L11.500 7.500 L9.500 6.800 Z" fill="#6a7cc0"/><path d="M4.500 9 L9 7.500 M5.500 11 L10.500 9.500 M6.500 13 L11.500 11.500" stroke="#4a3a10" stroke-width=".9" fill="none"/><path d="M2 13.500 L6 12.500 L8 15" stroke="#ffffff" stroke-width="1.200" fill="none"/><path d="M1.500 16 L5 15.500 L6 17.500" stroke="#8a2a36" stroke-width="1" fill="none"/></g></g></svg>
<span class="t" id="t56" style="left:252px;top:317px;font-size:8.7px;color:#202e52;transform:translate(0.84px,0.42px) rotate(.03deg) scaleX(1.0553);-webkit-text-stroke:0.22px #202e52;">Idé</span>
<span class="t" id="t57" style="left:252px;top:327px;font-size:8.3px;color:#868a92;transform:translate(0.88px,0.74px) rotate(.03deg) scaleX(1.0952);-webkit-text-stroke:0.1px #868a92;">Bracelets</span>
<div class="b" style="left:294.10px;top:328.30px;width:7.40px;height:7.40px;background:#888b91;border-radius:50%;"></div>
<div class="b" style="left:297.25px;top:331.20px;width:1.10px;height:3.00px;background:#fff;"></div>
<div class="b" style="left:297.25px;top:329.50px;width:1.10px;height:1.00px;background:#fff;border-radius:50%;"></div>
<span class="t" id="t58" style="left:382px;top:322px;font-size:8.3px;color:#2b3856;transform:translate(0.15px,0.85px) rotate(.03deg) scaleX(1.0487);-webkit-text-stroke:0.18px #2b3856;">1 option</span>
<svg class="b" style="left:427.00px;top:323.80px;" width="8.80" height="6.80" viewBox="0 0 21 16" preserveAspectRatio="none"><path d="M6 2 H20.500 M6 8 H20.500 M6 14 H20.500" stroke="#6e737d" stroke-width="2" fill="none"/><path d="M0.500 2 H3.500 M0.500 8 H3.500 M0.500 14 H3.500" stroke="#6e737d" stroke-width="2" fill="none"/></svg>
<span class="t" id="t59" style="left:478px;top:322px;font-size:8.3px;color:#2b3856;transform:translate(0.60px,0.80px) rotate(.03deg) scaleX(1.0568);-webkit-text-stroke:0.18px #2b3856;">20 <span class="u">uts</span></span>
<span class="t" id="t60" style="left:549px;top:322px;font-size:8.3px;color:#2b3856;transform:translate(0.01px,0.92px) rotate(.03deg) scaleX(1.0418);-webkit-text-stroke:0.18px #2b3856;">0 <span class="u">uts</span></span>
<span class="t" id="t61" style="left:617px;top:322px;font-size:8.3px;color:#2b3856;transform:translate(0.02px,0.80px) rotate(.03deg) scaleX(1.0494);-webkit-text-stroke:0.18px #2b3856;">20 <span class="u">uts</span></span>
<span class="t" id="t62" style="left:790px;top:322px;font-size:8.3px;color:#2b3856;transform:translate(1.00px,0.76px) rotate(.03deg) scaleX(1.0703);-webkit-text-stroke:0.18px #2b3856;">$0</span>
<div class="b" style="left:845.30px;top:321.50px;width:18.60px;height:10.60px;background:#0a2050;border-radius:5.300px;"></div>
<div class="b" style="left:854.90px;top:322.90px;width:7.60px;height:7.80px;background:#fff;border-radius:50%;"></div>
<svg class="b" style="left:882.90px;top:322.40px;" width="10.00" height="10.00" viewBox="0 0 24 24" preserveAspectRatio="none"><circle cx="12" cy="12" r="8" fill="#4e5a78"/><g fill="#4e5a78"><rect x="8.700" y="0.800" width="6.600" height="22.400" rx="1.500" transform="rotate(0 12 12)"/><rect x="8.700" y="0.800" width="6.600" height="22.400" rx="1.500" transform="rotate(60 12 12)"/><rect x="8.700" y="0.800" width="6.600" height="22.400" rx="1.500" transform="rotate(120 12 12)"/></g><circle cx="12" cy="12" r="3.500" fill="#fff"/></svg>
<svg class="b" style="left:231px;top:362px" width="14" height="19.6" viewBox="0 0 14 19.6"><defs><filter id="fc4" filterUnits="userSpaceOnUse" x="-4" y="-4" width="30" height="30"><feGaussianBlur stdDeviation="0.800"/></filter><clipPath id="c4"><rect width="14" height="19.6" rx="0"/></clipPath></defs><g clip-path="url(#c4)"><rect width="14" height="20" fill="#c99a80"/><g filter="url(#fc4)"><rect x="-1" y="-1" width="5" height="10" fill="#e0bfae"/><rect x="9" y="-1" width="6" height="9" fill="#d9b09a"/><path d="M5 1.500 L9.500 1.500 L9.500 6 L8.500 10 L7.500 13 L6 9 L5 6 Z" fill="#26307e"/><path d="M5.500 1 L9 1 L8.500 3 L6 3 Z" fill="#1a1a4a"/><path d="M1 10 L6 10 L7 20 L1 20 Z" fill="#b57e5e"/><path d="M8 10 L13 9 L14 20 L8 20 Z" fill="#a9704e"/><path d="M6.500 12 L8 12 L8 20 L7 20 Z" fill="#6a3e2a"/><rect x="12" y="7" width="3" height="5" fill="#e6c4b4"/></g><g opacity=".6"><path d="M5.500 1.500 L9 1.500 L9 6 L8 10 L7.500 12 L6.500 9 L5.500 6 Z" fill="#1c2470"/><path d="M7 12 L7.300 19" stroke="#4a2a1c" stroke-width=".9" fill="none"/><path d="M3 11 L4 19 M11 10.500 L11.500 19" stroke="#8a5a40" stroke-width=".8" fill="none"/></g></g></svg>
<span class="t" id="t63" style="left:252px;top:362px;font-size:8.7px;color:#202e52;transform:translate(0.97px,0.95px) rotate(.03deg) scaleX(1.0422);-webkit-text-stroke:0.22px #202e52;">Evening dress with slit</span>
<span class="t" id="t64" style="left:253px;top:373px;font-size:8.3px;color:#868a92;transform:translate(0.02px,0.43px) rotate(.03deg) scaleX(1.0728);-webkit-text-stroke:0.1px #868a92;">Clothing, Shoes &amp; Jewelry</span>
<div class="b" style="left:360.70px;top:373.70px;width:7.40px;height:7.40px;background:#888b91;border-radius:50%;"></div>
<div class="b" style="left:363.85px;top:376.60px;width:1.10px;height:3.00px;background:#fff;"></div>
<div class="b" style="left:363.85px;top:374.90px;width:1.10px;height:1.00px;background:#fff;border-radius:50%;"></div>
<span class="t" id="t65" style="left:382px;top:367px;font-size:8.3px;color:#2b3856;transform:translate(0.89px,1.00px) rotate(.03deg) scaleX(1.0732);-webkit-text-stroke:0.18px #2b3856;">0 chars.</span>
<span class="t" id="t66" style="left:479px;top:367px;font-size:8.3px;color:#2b3856;transform:translate(0.08px,0.94px) rotate(.03deg) scaleX(0.9978);-webkit-text-stroke:0.18px #2b3856;">10 <span class="u">uts</span></span>
<span class="t" id="t67" style="left:549px;top:367px;font-size:8.3px;color:#2b3856;transform:translate(0.01px,0.92px) rotate(.03deg) scaleX(1.0418);-webkit-text-stroke:0.18px #2b3856;">0 <span class="u">uts</span></span>
<span class="t" id="t68" style="left:617px;top:367px;font-size:8.3px;color:#2b3856;transform:translate(0.35px,0.85px) rotate(.03deg) scaleX(0.9978);-webkit-text-stroke:0.18px #2b3856;">10 <span class="u">uts</span></span>
<span class="t" id="t69" style="left:676px;top:354px;font-size:8.3px;color:#2b3856;transform:translate(0.67px,0.87px) rotate(.03deg) scaleX(1.0232);-webkit-text-stroke:0.18px #2b3856;"><span class="u">MP:</span> $0</span>
<span class="t" id="t70" style="left:674px;top:367px;font-size:8.3px;color:#5f6574;transform:translate(0.83px,0.95px) rotate(.03deg) scaleX(1.0496);">AvyUsa:</span>
<span class="t" id="t71" style="left:683px;top:380px;font-size:8.3px;color:#2b3856;transform:translate(0.12px,0.74px) rotate(.03deg) scaleX(1.0689);-webkit-text-stroke:0.18px #2b3856;">$28</span>
<span class="t" id="t72" style="left:734px;top:367px;font-size:8.3px;color:#2b3856;transform:translate(0.08px,0.87px) rotate(.03deg) scaleX(1.0759);-webkit-text-stroke:0.18px #2b3856;">$25</span>
<span class="t" id="t73" style="left:790px;top:367px;font-size:8.3px;color:#2b3856;transform:translate(1.00px,0.76px) rotate(.03deg) scaleX(1.0703);-webkit-text-stroke:0.18px #2b3856;">$0</span>
<div class="b" style="left:845.30px;top:365.90px;width:18.60px;height:10.60px;background:#0a2050;border-radius:5.300px;"></div>
<div class="b" style="left:854.90px;top:367.30px;width:7.60px;height:7.80px;background:#fff;border-radius:50%;"></div>
<svg class="b" style="left:882.90px;top:367.00px;" width="10.00" height="10.00" viewBox="0 0 24 24" preserveAspectRatio="none"><circle cx="12" cy="12" r="8" fill="#4e5a78"/><g fill="#4e5a78"><rect x="8.700" y="0.800" width="6.600" height="22.400" rx="1.500" transform="rotate(0 12 12)"/><rect x="8.700" y="0.800" width="6.600" height="22.400" rx="1.500" transform="rotate(60 12 12)"/><rect x="8.700" y="0.800" width="6.600" height="22.400" rx="1.500" transform="rotate(120 12 12)"/></g><circle cx="12" cy="12" r="3.500" fill="#fff"/></svg>
<svg class="b" style="left:228px;top:407px" width="20" height="19.6" viewBox="0 0 20 19.6"><defs><filter id="fc5" filterUnits="userSpaceOnUse" x="-4" y="-4" width="30" height="30"><feGaussianBlur stdDeviation="0.800"/></filter><clipPath id="c5"><rect width="20" height="19.6" rx="3.2"/></clipPath></defs><g clip-path="url(#c5)"><rect width="20" height="20" fill="#0e0b09"/><g filter="url(#fc5)"><rect x="5" y="1.500" width="10" height="16" rx="1.500" fill="#c98a2a"/><rect x="6" y="3" width="7" height="5" fill="#e0a848"/><rect x="6.500" y="9" width="7" height="5" fill="#d99a32"/><path d="M8 2 L11 8 L8 12 L12 16" stroke="#f0c878" stroke-width="1" fill="none"/><rect x="14.500" y="8" width="3.500" height="11" rx="1.500" fill="#c9957a"/><rect x="2.500" y="9" width="2.500" height="8" fill="#8a6a5e"/><rect x="6" y="17.500" width="5" height="2.500" fill="#4a5a2e"/><rect x="3" y="14" width="4" height="4" fill="#b0805e"/></g><g opacity=".6"><rect x="0" y="0" width="4.500" height="8" fill="#050403"/><rect x="16" y="0" width="4" height="7" fill="#050403"/><path d="M7 4 L10 3 L12 6 L9 8 L12 11 L8 13 L11 16" stroke="#f2cf80" stroke-width="1.100" fill="none"/><path d="M6.500 7 L8 10 M12.500 8 L13.500 12" stroke="#8a5a18" stroke-width=".9" fill="none"/><path d="M3 10 H4.500 M3 12.500 H4.500 M3 15 H4.500" stroke="#e8c0b0" stroke-width=".9"/></g></g></svg>
<span class="t" id="t74" style="left:253px;top:407px;font-size:8.7px;color:#202e52;transform:translate(0.21px,0.41px) rotate(.03deg) scaleX(1.0530);-webkit-text-stroke:0.22px #202e52;">custom box</span>
<span class="t" id="t75" style="left:253px;top:417px;font-size:8.3px;color:#868a92;transform:translate(0.58px,0.77px) rotate(.03deg) scaleX(1.0700);-webkit-text-stroke:0.1px #868a92;">Arts, Crafts &amp; Sewing</span>
<div class="b" style="left:341.30px;top:418.30px;width:7.40px;height:7.40px;background:#888b91;border-radius:50%;"></div>
<div class="b" style="left:344.45px;top:421.20px;width:1.10px;height:3.00px;background:#fff;"></div>
<div class="b" style="left:344.45px;top:419.50px;width:1.10px;height:1.00px;background:#fff;border-radius:50%;"></div>
<span class="t" id="t76" style="left:382px;top:412px;font-size:8.3px;color:#2b3856;transform:translate(0.84px,0.61px) rotate(.03deg) scaleX(1.0759);-webkit-text-stroke:0.18px #2b3856;">0 chars.</span>
<span class="t" id="t77" style="left:481px;top:412px;font-size:8.3px;color:#2b3856;transform:translate(0.16px,0.65px) rotate(.03deg) scaleX(1.0481);-webkit-text-stroke:0.18px #2b3856;">0 <span class="u">uts</span></span>
<span class="t" id="t78" style="left:548px;top:412px;font-size:8.3px;color:#2b3856;transform:translate(0.98px,0.78px) rotate(.03deg) scaleX(1.0417);-webkit-text-stroke:0.18px #2b3856;">0 <span class="u">uts</span></span>
<span class="t" id="t79" style="left:619px;top:412px;font-size:8.3px;color:#2b3856;transform:translate(0.47px,0.46px) rotate(.03deg) scaleX(1.0707);-webkit-text-stroke:0.18px #2b3856;">0 <span class="u">uts</span></span>
<span class="t" id="t80" style="left:673px;top:412px;font-size:8.3px;color:#2b3856;transform:translate(0.88px,0.53px) rotate(.03deg) scaleX(1.0364);-webkit-text-stroke:0.18px #2b3856;"><span class="u">MP:</span> $58</span>
<span class="t" id="t81" style="left:737px;top:412px;font-size:8.3px;color:#2b3856;transform:translate(0.04px,0.62px) rotate(.03deg) scaleX(1.0514);-webkit-text-stroke:0.18px #2b3856;">$0</span>
<span class="t" id="t82" style="left:791px;top:412px;font-size:8.3px;color:#2b3856;transform:translate(0.05px,0.65px) rotate(.03deg) scaleX(1.0617);-webkit-text-stroke:0.18px #2b3856;">$0</span>
<div class="b" style="left:845.30px;top:410.70px;width:18.60px;height:10.60px;background:#0a2050;border-radius:5.300px;"></div>
<div class="b" style="left:854.90px;top:412.10px;width:7.60px;height:7.80px;background:#fff;border-radius:50%;"></div>
<svg class="b" style="left:882.90px;top:411.80px;" width="10.00" height="10.00" viewBox="0 0 24 24" preserveAspectRatio="none"><circle cx="12" cy="12" r="8" fill="#4e5a78"/><g fill="#4e5a78"><rect x="8.700" y="0.800" width="6.600" height="22.400" rx="1.500" transform="rotate(0 12 12)"/><rect x="8.700" y="0.800" width="6.600" height="22.400" rx="1.500" transform="rotate(60 12 12)"/><rect x="8.700" y="0.800" width="6.600" height="22.400" rx="1.500" transform="rotate(120 12 12)"/></g><circle cx="12" cy="12" r="3.500" fill="#fff"/></svg>
<svg class="b" style="left:228px;top:446px" width="20" height="19.2" viewBox="0 0 20 19.2"><defs><filter id="fc6" filterUnits="userSpaceOnUse" x="-4" y="-4" width="30" height="30"><feGaussianBlur stdDeviation="0.800"/></filter><clipPath id="c6"><rect width="20" height="19.2" rx="3.2"/></clipPath></defs><g clip-path="url(#c6)"><rect width="20" height="20" fill="#b98e7a"/><g filter="url(#fc6)"><rect x="-1" y="-1" width="15" height="7" fill="#cdb0a2"/><rect x="14" y="-1" width="7" height="12" fill="#2a1c1a"/><rect x="13" y="1" width="2" height="8" fill="#d9c2b8"/><path d="M2 7 L14 5 L19 8 L19 15 L3 17 Z" fill="#8a5238"/><path d="M3 8 L10 6.500 L10 15 L3 16 Z" fill="#7a452e"/><path d="M10 6 L13 10 L12 15" stroke="#c99a80" stroke-width="1" fill="none"/><rect x="-1" y="6" width="3" height="12" fill="#3a2620"/><rect x="0" y="17" width="21" height="4" fill="#d9c0b4"/><rect x="15" y="11" width="6" height="5" fill="#a87862"/></g><g opacity=".55"><path d="M3 8.500 Q10 5 18 8.500 L18 15 Q10 17.500 3 15.500 Z" fill="#6e3e28"/><path d="M10 6.500 L12.500 10 L11.500 14.500" stroke="#d9b098" stroke-width="1" fill="none"/><rect x="15.500" y="0" width="4.500" height="9" fill="#120c0b"/><rect x="0" y="7" width="2" height="10" fill="#1c1210"/></g></g></svg>
<span class="t" id="t83" style="left:253px;top:446px;font-size:8.7px;color:#202e52;transform:translate(0.57px,0.51px) rotate(.03deg) scaleX(0.9889);-webkit-text-stroke:0.22px #202e52;">Travel bag</span>
<span class="t" id="t84" style="left:252px;top:456px;font-size:8.3px;color:#868a92;transform:translate(0.93px,0.69px) rotate(.03deg) scaleX(1.0661);-webkit-text-stroke:0.1px #868a92;">Travel Duffels</span>
<div class="b" style="left:310.50px;top:457.10px;width:7.40px;height:7.40px;background:#888b91;border-radius:50%;"></div>
<div class="b" style="left:313.65px;top:460.00px;width:1.10px;height:3.00px;background:#fff;"></div>
<div class="b" style="left:313.65px;top:458.30px;width:1.10px;height:1.00px;background:#fff;border-radius:50%;"></div>
<span class="t" id="t85" style="left:382px;top:451px;font-size:8.3px;color:#2b3856;transform:translate(0.71px,0.38px) rotate(.03deg) scaleX(1.0813);-webkit-text-stroke:0.18px #2b3856;">0 chars.</span>
<span class="t" id="t86" style="left:479px;top:451px;font-size:8.3px;color:#2b3856;transform:translate(0.32px,0.84px) rotate(.03deg) scaleX(0.9985);-webkit-text-stroke:0.18px #2b3856;">21 <span class="u">uts</span></span>
<span class="t" id="t87" style="left:548px;top:451px;font-size:8.3px;color:#2b3856;transform:translate(0.99px,0.48px) rotate(.03deg) scaleX(1.0029);-webkit-text-stroke:0.18px #2b3856;">1 <span class="u">uts</span></span>
<span class="t" id="t88" style="left:616px;top:451px;font-size:8.3px;color:#2b3856;transform:translate(0.85px,0.42px) rotate(.03deg) scaleX(1.0774);-webkit-text-stroke:0.18px #2b3856;">20 <span class="u">uts</span></span>
<span class="t" id="t89" style="left:673px;top:451px;font-size:8.3px;color:#2b3856;transform:translate(0.92px,0.37px) rotate(.03deg) scaleX(1.0324);-webkit-text-stroke:0.18px #2b3856;"><span class="u">MP:</span> $50</span>
<span class="t" id="t90" style="left:734px;top:451px;font-size:8.3px;color:#2b3856;transform:translate(0.78px,0.33px) rotate(.03deg) scaleX(1.0307);-webkit-text-stroke:0.18px #2b3856;">$25</span>
<span class="t" id="t91" style="left:791px;top:451px;font-size:8.3px;color:#2b3856;transform:translate(0.15px,0.35px) rotate(.03deg) scaleX(1.0526);-webkit-text-stroke:0.18px #2b3856;">$0</span>
<div class="b" style="left:845.30px;top:449.50px;width:18.60px;height:10.60px;background:#0a2050;border-radius:5.300px;"></div>
<div class="b" style="left:854.90px;top:450.90px;width:7.60px;height:7.80px;background:#fff;border-radius:50%;"></div>
<svg class="b" style="left:882.90px;top:450.60px;" width="10.00" height="10.00" viewBox="0 0 24 24" preserveAspectRatio="none"><circle cx="12" cy="12" r="8" fill="#4e5a78"/><g fill="#4e5a78"><rect x="8.700" y="0.800" width="6.600" height="22.400" rx="1.500" transform="rotate(0 12 12)"/><rect x="8.700" y="0.800" width="6.600" height="22.400" rx="1.500" transform="rotate(60 12 12)"/><rect x="8.700" y="0.800" width="6.600" height="22.400" rx="1.500" transform="rotate(120 12 12)"/></g><circle cx="12" cy="12" r="3.500" fill="#fff"/></svg>
<div class="b" style="left:873.80px;top:228.70px;width:29.50px;height:29.10px;border:4.1px solid #ea1f29;border-radius:50%;z-index:5;"></div>
<div class="b" style="left:793.80px;top:258.80px;width:122.00px;height:89.20px;background:#fff;border-radius:3px;box-shadow:0 0 5px rgba(40,50,80,.22),0 1px 2px rgba(40,50,80,.10);z-index:6;"></div>
<div class="b" style="left:798.00px;top:324.20px;width:114.50px;height:20.70px;background:#e4e8f0;border-radius:2.5px;z-index:7;"></div>
<span class="t" id="t92" style="left:816px;top:268px;font-size:8.5px;color:#27334f;transform:translate(0.31px,0.09px) rotate(.03deg) scaleX(1.0512);-webkit-text-stroke:0.17px #27334f;z-index:8;">Add existence</span>
<span class="t" id="t93" style="left:815px;top:289px;font-size:8.5px;color:#27334f;transform:translate(0.76px,0.34px) rotate(.03deg) scaleX(1.0622);-webkit-text-stroke:0.17px #27334f;z-index:8;">Load existence history</span>
<span class="t" id="t94" style="left:815px;top:309px;font-size:8.5px;color:#27334f;transform:translate(0.83px,0.16px) rotate(.03deg) scaleX(1.0691);-webkit-text-stroke:0.17px #27334f;z-index:8;">Edit</span>
<span class="t" id="t95" style="left:815px;top:330px;font-size:8.5px;color:#27334f;transform:translate(0.86px,0.40px) rotate(.03deg) scaleX(1.0379);-webkit-text-stroke:0.17px #27334f;z-index:8;">Remove</span>
<svg class="b" style="left:805.40px;top:269.00px;z-index:8;" width="6.00" height="6.00" viewBox="0 0 10 10" preserveAspectRatio="none"><path d="M5 0.200 V9.800 M0.200 5 H9.800" stroke="#1f2a47" stroke-width="1.450" fill="none"/></svg>
<svg class="b" style="left:804.20px;top:288.60px;z-index:8;" width="8.40" height="8.40" viewBox="0 0 24 24" preserveAspectRatio="none"><path d="M4.800 7 A9 9 0 1 1 3.200 13" fill="none" stroke="#1f2a47" stroke-width="3"/><path d="M1 1.500 V9.500 H9 Z" fill="#1f2a47"/><path d="M12 7 V12.500 L15.800 14.800" fill="none" stroke="#1f2a47" stroke-width="2.800"/></svg>
<svg class="b" style="left:804.20px;top:308.80px;z-index:8;" width="8.40" height="8.40" viewBox="0 0 24 24" preserveAspectRatio="none"><path d="M11 4 H5 a2.500 2.500 0 0 0 -2.500 2.500 V19 a2.500 2.500 0 0 0 2.500 2.500 H17.500 a2.500 2.500 0 0 0 2.500 -2.500 V13" fill="none" stroke="#1f2a47" stroke-width="3"/><path d="M8.500 15.500 L9.500 11 L18.500 2 L22 5.500 L13 14.500 Z" fill="none" stroke="#1f2a47" stroke-width="2.600" stroke-linejoin="round"/></svg>
<svg class="b" style="left:804.60px;top:329.80px;z-index:8;" width="7.60" height="8.80" viewBox="0 0 24 24" preserveAspectRatio="none"><path d="M2.500 6 H21.500 M8.500 6 V2.800 H15.500 V6" fill="none" stroke="#1f2a47" stroke-width="3"/><path d="M4.800 6 L5.800 20.500 a2 2 0 0 0 2 1.800 H16.200 a2 2 0 0 0 2 -1.800 L19.200 6" fill="none" stroke="#1f2a47" stroke-width="3"/><path d="M9 11 H15 M9 16 H15" stroke="#1f2a47" stroke-width="2.400"/></svg>
<svg class="b" style="left:909.00px;top:325.00px;z-index:9;" width="81.00" height="21.00" viewBox="0 0 81 21" preserveAspectRatio="none"><path d="M5 10.500 H80" stroke="#e8353a" stroke-width="4.200" fill="none"/><path d="M12.800 4.200 L4.300 10.500 L12.800 16.800" fill="none" stroke="#e8353a" stroke-width="3.800" stroke-linejoin="round" stroke-linecap="round"/></svg>
<div class="b" style="left:892.00px;top:431.40px;width:32.40px;height:32.40px;background:#fff;border-radius:50%;box-shadow:0 1px 5px rgba(30,40,70,.28);z-index:10;"></div>
<svg class="b" style="left:897.80px;top:438.60px;z-index:11;" width="18.80" height="19.20" viewBox="0 0 24 24" preserveAspectRatio="none"><path d="M13 2.500 C13.900 8.600 16.400 11.100 22.500 12 C16.400 12.900 13.900 15.400 13 21.500 C12.100 15.400 9.600 12.900 3.500 12 C9.600 11.100 12.100 8.600 13 2.500 Z" fill="#0a2050" stroke="#0a2050" stroke-width="2.600" stroke-linejoin="round"/><path d="M4.500 1.500 C4.900 3.900 5.600 4.600 8 5 C5.600 5.400 4.900 6.100 4.500 8.500 C4.100 6.100 3.400 5.400 1 5 C3.400 4.600 4.100 3.900 4.500 1.500 Z" fill="#0a2050" stroke="#0a2050" stroke-width=".6"/><circle cx="20.500" cy="20.500" r="1.700" fill="#0a2050"/></svg>
</div>
</body>
</html>
